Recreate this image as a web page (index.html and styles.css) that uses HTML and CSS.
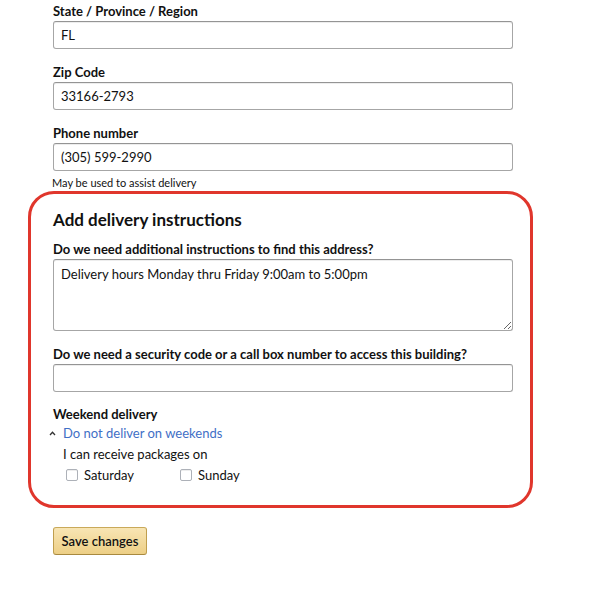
FILE: index.html
```html
<!DOCTYPE html>
<html lang="en">
<head>
  <meta charset="UTF-8">
  <meta name="viewport" content="width=device-width, initial-scale=1.0">
  <title>Edit address</title>
  <link rel="stylesheet" href="styles.css">
</head>
<body>
  <form class="address-form">
    <div class="field">
      <label for="state">State / Province / Region</label>
      <input id="state" type="text" value="FL">
    </div>
    <div class="field">
      <label for="zip">Zip Code</label>
      <input id="zip" type="text" value="33166-2793">
    </div>
    <div class="field field-phone">
      <label for="phone">Phone number</label>
      <input id="phone" type="text" value="(305) 599-2990">
      <p class="hint">May be used to assist delivery</p>
    </div>

    <section class="instructions">
      <h3>Add delivery instructions</h3>
      <div class="field">
        <label for="notes">Do we need additional instructions to find this address?</label>
        <textarea id="notes">Delivery hours Monday thru Friday 9:00am to 5:00pm</textarea>
      </div>
      <div class="field field-code">
        <label for="code">Do we need a security code or a call box number to access this building?</label>
        <input id="code" type="text">
      </div>
      <div class="weekend">
        <label>Weekend delivery</label>
        <a class="toggle" href="#">
          <svg class="caret" width="7" height="5" viewBox="0 0 7 5"><path d="M1 4 L3.5 1.3 L6 4" fill="none" stroke="#333" stroke-width="1.3"/></svg>
          Do not deliver on weekends
        </a>
        <p class="receive">I can receive packages on</p>
        <div class="days">
          <label class="day"><input type="checkbox"><span>Saturday</span></label>
          <label class="day"><input type="checkbox"><span>Sunday</span></label>
        </div>
      </div>
    </section>

    <button type="button" class="save">Save changes</button>
  </form>
</body>
</html>
```

FILE: styles.css
```css
body {
  font-family: Lato, 'Liberation Sans', Arial, sans-serif;
  margin: 0;
  padding: 0;
  background-color: #fff;
  color: #111;
  font-size: 13px;
}
.address-form {
  width: 505px;
  margin-left: 28px;
  padding-top: 3px;
}
.field {
  padding: 0 20px 0 25px;
  margin-bottom: 15px;
}
.field label,
.weekend > label {
  display: block;
  font-weight: 700;
  line-height: 16px;
  margin-bottom: 2px;
}
input[type="text"],
textarea {
  display: block;
  box-sizing: border-box;
  width: 460px;
  height: 28px;
  margin: 0;
  padding: 0 7px;
  font-family: inherit;
  font-size: 13px;
  color: #111;
  border: 1px solid #a6a6a6;
  border-top-color: #949494;
  border-radius: 3px;
  box-shadow: 0 1px 0 rgba(255,255,255,0.5), 0 1px 0 rgba(0,0,0,0.07) inset;
  outline: none;
}
textarea {
  height: 72px;
  padding: 6px 7px;
  line-height: 16px;
  resize: vertical;
}
.field-phone {
  margin-bottom: 0;
}
.hint {
  margin: 5px 0 0 -1px;
  font-size: 11px;
  line-height: 14px;
  color: #111;
}
.instructions {
  margin-top: 1px;
  border: 3px solid #e0362c;
  border-radius: 26px;
  padding: 16px 0 22px;
}
.instructions .field {
  padding: 0 17px 0 22px;
  margin-bottom: 15px;
}
.instructions .field-code {
  margin-bottom: 14px;
}
.instructions h3 {
  margin: 0 0 11px 22px;
  font-size: 17px;
  line-height: 20px;
  font-weight: 700;
}
.weekend {
  padding: 0 17px 0 22px;
}
.weekend > label {
  margin-bottom: 3px;
}
.toggle {
  display: flex;
  align-items: center;
  margin-left: -4px;
  color: #3f6fc6;
  text-decoration: none;
  line-height: 16px;
}
.caret {
  margin: 0 7px 0 0;
}
.receive {
  margin: 5px 0 0 10px;
  line-height: 16px;
}
.days {
  display: flex;
  margin: 5px 0 0 13px;
}
.day {
  display: flex;
  align-items: center;
  width: 114px;
  line-height: 16px;
}
.day input {
  appearance: none;
  width: 12px;
  height: 12px;
  margin: 0 6px 0 0;
  border: 1px solid #adb1b8;
  border-radius: 2px;
  background: #fff;
  box-shadow: 0 1px 0 rgba(0,0,0,0.07) inset;
}
.save {
  display: block;
  margin: 19px 0 0 25px;
  width: 94px;
  height: 28px;
  padding: 0;
  font-family: inherit;
  font-size: 13px;
  font-weight: 600;
  color: #111;
  background: linear-gradient(to bottom, #f8e5b4, #edcf86);
  border: 1px solid;
  border-color: #c9a95a #bf9e4e #a8893f;
  border-radius: 3px;
  cursor: pointer;
}
```
